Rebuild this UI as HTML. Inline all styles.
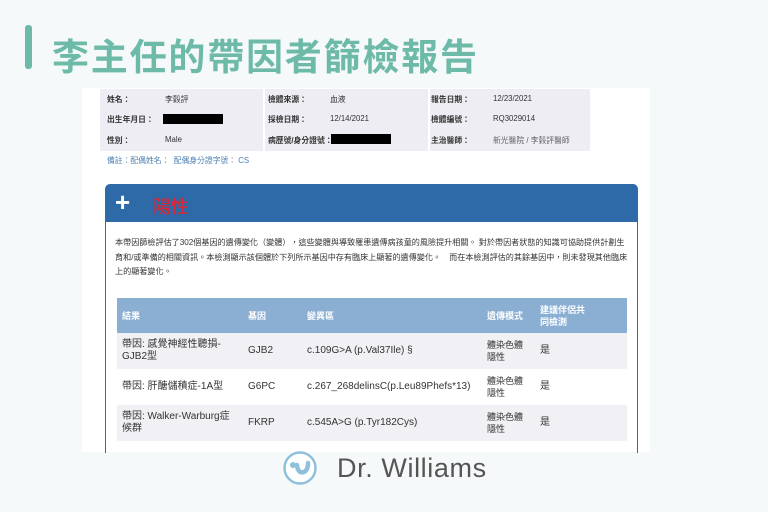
<!DOCTYPE html><html><head><meta charset="utf-8"><style>
*{margin:0;padding:0;box-sizing:border-box}
body{width:768px;height:512px;background:#f6f9fa;position:relative;overflow:hidden;font-family:"Liberation Sans","Noto Sans CJK TC",sans-serif}
.a{position:absolute}
.bar{left:25px;top:25px;width:7px;height:44px;background:#6dbaa8;border-radius:3px}
.title{left:52px;top:35px;font-size:37px;font-weight:bold;color:#6dbaa8;letter-spacing:1.8px;line-height:46px;white-space:nowrap}
.paper{left:82px;top:88px;width:568px;height:364px;background:#fff}
.cell{background:#ededf3;height:62px;top:89px}
.t{font-size:7.8px;color:#333;white-space:nowrap}
.blk{background:#000;height:10px}
.hdr{left:105px;top:184px;width:533px;height:38px;background:#2e6aa8;border-radius:5px 5px 0 0}
.body{left:105px;top:222px;width:533px;height:232px;border:1.5px solid #2e6aa8;border-top:none}
.p{left:115px;font-size:8.1px;color:#333;white-space:nowrap}
table{position:absolute;left:117px;top:298px;width:510px;border-collapse:collapse;font-size:10px;color:#333}
th{background:#8aafd3;color:#fff;text-align:left;font-weight:bold;height:35px;padding-left:5px;font-size:9px;line-height:12px}
td{height:36px;padding-left:5px;line-height:12px}
tr.g td{background:#f0f0f5}
</style></head><body>
<div class="a bar"></div>
<div class="a title">李主任的帶因者篩檢報告</div>
<div class="a paper"></div>
<div class="a cell" style="left:100px;width:163px"></div>
<div class="a cell" style="left:265px;width:163px"></div>
<div class="a cell" style="left:430px;width:160px"></div>
<div class="a t" style="left:107px;top:94px;font-weight:bold">姓名：</div><div class="a t" style="left:165px;top:94px">李穀評</div>
<div class="a t" style="left:107px;top:114px;font-weight:bold">出生年月日：</div><div class="a blk" style="left:163px;top:114px;width:60px"></div>
<div class="a t" style="left:107px;top:135px;font-weight:bold">性別：</div><div class="a t" style="left:165px;top:135px">Male</div>
<div class="a t" style="left:268px;top:94px;font-weight:bold">檢體來源：</div><div class="a t" style="left:330px;top:94px">血液</div>
<div class="a t" style="left:268px;top:114px;font-weight:bold">採檢日期：</div><div class="a t" style="left:330px;top:114px">12/14/2021</div>
<div class="a t" style="left:268px;top:135px;font-weight:bold">病歷號/身分證號：</div><div class="a blk" style="left:331px;top:134px;width:60px"></div>
<div class="a t" style="left:431px;top:94px;font-weight:bold">報告日期：</div><div class="a t" style="left:493px;top:94px">12/23/2021</div>
<div class="a t" style="left:431px;top:114px;font-weight:bold">檢體編號：</div><div class="a t" style="left:493px;top:114px">RQ3029014</div>
<div class="a t" style="left:431px;top:135px;font-weight:bold">主治醫師：</div><div class="a t" style="left:493px;top:135px;color:#666">新光醫院 / 李穀評醫師</div>
<div class="a t" style="left:107px;top:155px;color:#4d7fb0">備註：配偶姓名：&nbsp;&nbsp;配偶身分證字號：&nbsp;CS</div>
<div class="a hdr"><span class="a" style="left:10px;top:3px;color:#fff;font-size:26px;font-weight:bold">+</span><span class="a" style="left:48px;top:9px;color:#e8202a;font-size:18px">陽性</span></div>
<div class="a body"></div>
<div class="a p" style="top:237px">本帶因篩檢評估了302個基因的遺傳變化（變體），這些變體與導致罹患遺傳病孩童的風險提升相關。 對於帶因者狀態的知識可協助提供計劃生</div>
<div class="a p" style="top:252px">育和/或準備的相關資訊。本檢測顯示該個體於下列所示基因中存有臨床上顯著的遺傳變化。　而在本檢測評估的其餘基因中，則未發現其他臨床</div>
<div class="a p" style="top:266px">上的顯著變化。</div>
<table>
<tr><th style="width:126px">結果</th><th style="width:59px">基因</th><th style="width:180px">變異區</th><th style="width:53px">遺傳模式</th><th>建議伴侶共<br>同檢測</th></tr>
<tr class="g"><td>帶因: 感覺神經性聽損-<br>GJB2型</td><td>GJB2</td><td>c.109G&gt;A (p.Val37Ile) §</td><td style="font-size:9px">體染色體<br>隱性</td><td>是</td></tr>
<tr><td>帶因: 肝醣儲積症-1A型</td><td>G6PC</td><td>c.267_268delinsC(p.Leu89Phefs*13)</td><td style="font-size:9px">體染色體<br>隱性</td><td>是</td></tr>
<tr class="g"><td>帶因: Walker-Warburg症<br>候群</td><td>FKRP</td><td>c.545A&gt;G (p.Tyr182Cys)</td><td style="font-size:9px">體染色體<br>隱性</td><td>是</td></tr>
</table>
<div class="a" style="left:0;top:453px;width:768px;height:59px;background:#f6f9fa"></div>
<svg class="a" style="left:282px;top:450px" width="36" height="36" viewBox="0 0 36 36"><circle cx="18" cy="18" r="15.5" fill="#fff" stroke="#8fc0dc" stroke-width="2.5"/><circle cx="11" cy="15" r="3" fill="#8fc0dc"/><path d="M15 15 Q16 24 22 22 Q26 20 26 13" fill="none" stroke="#8fc0dc" stroke-width="4.5" stroke-linecap="round"/></svg>
<div class="a" style="left:337px;top:453px;font-size:27px;color:#555;letter-spacing:0.6px;white-space:nowrap">Dr. Williams</div>
</body></html>
